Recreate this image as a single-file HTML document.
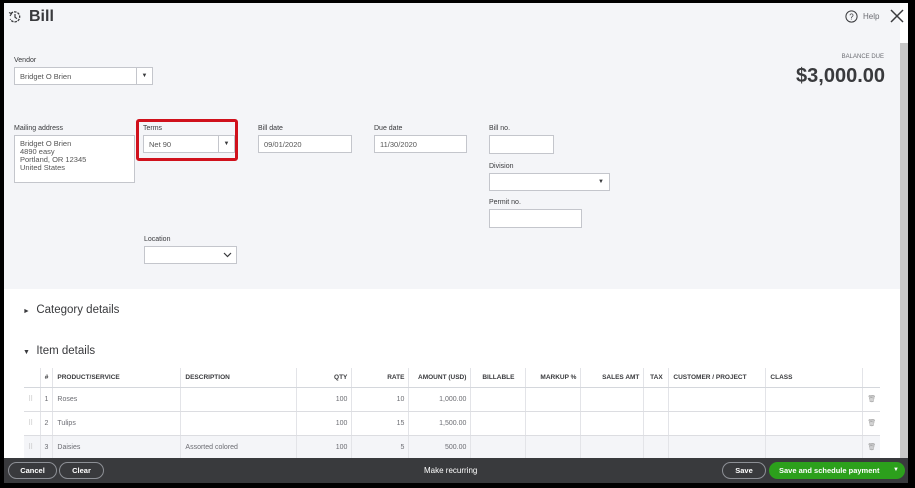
<!DOCTYPE html>
<html><head><meta charset="utf-8"><style>
*{box-sizing:border-box;margin:0;padding:0}
body{width:915px;height:488px;background:#000;font-family:"Liberation Sans",sans-serif;position:relative;overflow:hidden;color:#393a3d}
#page{position:absolute;left:4px;top:3px;width:904px;height:480px;background:#fff;overflow:hidden}
#top{position:absolute;left:0;top:0;width:896px;height:286px;background:#f4f5f8}
.a{position:absolute}
.lbl{position:absolute;font-size:7px;color:#393a3d}
.inp{position:absolute;background:#fff;border:1px solid #c4c6cc;font-size:7.5px;color:#555;padding:0 0 0 5px;line-height:17px}
.dd{position:absolute;top:0;right:0;width:16px;height:100%;border-left:1px solid #c4c6cc;font-size:6px;text-align:center;line-height:16px;color:#393a3d}
table{position:absolute;left:20px;top:365px;border-collapse:collapse;font-size:7px}
td,th{height:24px;border-left:1px solid #e3e4e8;border-bottom:1px solid #dcdde1;padding:0 4px;color:#6b6c72;font-weight:normal;white-space:nowrap}
th{height:19px;font-weight:bold;color:#393a3d;font-size:6.5px;border-bottom:1px solid #d4d7dc}
td:first-child,th:first-child{border-left:none}
.r{text-align:right}
tr.g td{background:#f4f5f8}
#bar{position:absolute;left:0;top:455px;width:904px;height:25px;background:#393a3d}
.btn{position:absolute;top:4px;height:17px;border:1px solid #8d9096;border-radius:9px;color:#fff;font-size:7.5px;font-weight:bold;text-align:center;line-height:15px}
</style></head><body>
<div id="page">
<div id="top"></div>
<svg class="a" style="left:4px;top:7px" width="14" height="14" viewBox="0 0 14 14"><path d="M3 3.5A5 5 0 1 1 2.2 9" fill="none" stroke="#393a3d" stroke-width="1.3" stroke-dasharray="2.5 1"/><path d="M7 4v3.2l2 1.5" fill="none" stroke="#393a3d" stroke-width="1.2"/><path d="M1 2.5l2.5 1.2L2 6" fill="none" stroke="#393a3d" stroke-width="1.1"/></svg>
<div class="a" style="left:25px;top:5px;font-size:16px;font-weight:bold;color:#393a3d">Bill</div>
<svg class="a" style="left:841px;top:7px" width="13" height="13"><circle cx="6.5" cy="6.5" r="5.6" fill="none" stroke="#393a3d" stroke-width="1"/><text x="6.5" y="9.3" font-size="8" text-anchor="middle" fill="#393a3d" font-family="Liberation Sans">?</text></svg>
<div class="a" style="left:859px;top:9px;font-size:8px;color:#6b6c72">Help</div>
<svg class="a" style="left:886px;top:6px" width="14" height="14"><path d="M1 1L13 13M13 1L1 13" stroke="#393a3d" stroke-width="1.5"/></svg>
<div class="a" style="left:896px;top:40px;width:8px;height:440px;background:#c8c8c8"></div>
<div class="lbl" style="left:10px;top:54px">Vendor</div>
<div class="inp" style="left:10px;top:64px;width:139px;height:18px">Bridget O Brien<div class="dd">▼</div></div>
<div class="a" style="left:800px;top:51px;font-size:6px;color:#6b6c72;width:80px;text-align:right">BALANCE DUE</div>
<div class="a" style="left:760px;top:62px;font-size:20px;font-weight:bold;color:#393a3d;width:121px;text-align:right">$3,000.00</div>
<div class="lbl" style="left:10px;top:122px">Mailing address</div>
<div class="inp" style="left:10px;top:132px;width:121px;height:48px;line-height:8px;padding-top:4px">Bridget O Brien<br>4890 easy<br>Portland, OR 12345<br>United States</div>
<div class="a" style="left:132px;top:116px;width:102px;height:42px;border:3px solid #d0111c;border-radius:3px"></div>
<div class="lbl" style="left:139px;top:122px">Terms</div>
<div class="inp" style="left:139px;top:132px;width:92px;height:18px">Net 90<div class="dd">▼</div></div>
<div class="lbl" style="left:254px;top:122px">Bill date</div>
<div class="inp" style="left:254px;top:132px;width:94px;height:18px">09/01/2020</div>
<div class="lbl" style="left:370px;top:122px">Due date</div>
<div class="inp" style="left:370px;top:132px;width:93px;height:18px">11/30/2020</div>
<div class="lbl" style="left:485px;top:122px">Bill no.</div>
<div class="inp" style="left:485px;top:132px;width:65px;height:19px"></div>
<div class="lbl" style="left:485px;top:160px">Division</div>
<div class="inp" style="left:485px;top:170px;width:121px;height:18px"><div class="dd" style="border-left:none">▼</div></div>
<div class="lbl" style="left:485px;top:196px">Permit no.</div>
<div class="inp" style="left:485px;top:206px;width:93px;height:19px"></div>
<div class="lbl" style="left:140px;top:233px">Location</div>
<div class="inp" style="left:140px;top:243px;width:93px;height:18px"><svg class="a" style="right:4px;top:5px" width="9" height="6"><path d="M1 1l3.5 3.5L8 1" fill="none" stroke="#393a3d" stroke-width="1.2"/></svg></div>
<div class="a" style="left:19px;top:301px;font-size:11.5px;color:#393a3d"><span style="font-size:7px">►</span>&nbsp; Category details</div>
<div class="a" style="left:19px;top:342px;font-size:11.5px;color:#393a3d"><span style="font-size:7px">▼</span>&nbsp; Item details</div>
<table>
<tr><th style="width:16px"></th><th class="r" style="width:12px">#</th><th style="width:128px;text-align:left">PRODUCT/SERVICE</th><th style="width:116px;text-align:left">DESCRIPTION</th><th class="r" style="width:55px">QTY</th><th class="r" style="width:57px">RATE</th><th class="r" style="width:62px">AMOUNT (USD)</th><th style="width:55px;text-align:center">BILLABLE</th><th class="r" style="width:55px">MARKUP %</th><th class="r" style="width:63px">SALES AMT</th><th style="width:25px">TAX</th><th style="width:97px;text-align:left">CUSTOMER / PROJECT</th><th style="width:97px;text-align:left">CLASS</th><th style="width:16px"></th></tr>
<tr><td style="color:#bbb">⠿</td><td class="r">1</td><td>Roses</td><td></td><td class="r">100</td><td class="r">10</td><td class="r">1,000.00</td><td></td><td></td><td></td><td></td><td></td><td></td><td style="color:#999">🗑</td></tr>
<tr><td style="color:#bbb">⠿</td><td class="r">2</td><td>Tulips</td><td></td><td class="r">100</td><td class="r">15</td><td class="r">1,500.00</td><td></td><td></td><td></td><td></td><td></td><td></td><td style="color:#999">🗑</td></tr>
<tr class="g"><td style="color:#bbb">⠿</td><td class="r">3</td><td>Daisies</td><td>Assorted colored</td><td class="r">100</td><td class="r">5</td><td class="r">500.00</td><td></td><td></td><td></td><td></td><td></td><td></td><td style="color:#999">🗑</td></tr>
</table>
<div id="bar">
<div class="btn" style="left:4px;width:49px">Cancel</div>
<div class="btn" style="left:55px;width:45px">Clear</div>
<div class="a" style="left:420px;top:8px;font-size:8px;color:#fff">Make recurring</div>
<div class="btn" style="left:718px;width:44px">Save</div>
<div class="btn" style="left:765px;width:136px;background:#2ca01c;border-color:#2ca01c;text-align:left;padding-left:9px">Save and schedule payment<span style="position:absolute;right:5px;font-size:6px">▼</span></div>
</div>
</div>
</body></html>
